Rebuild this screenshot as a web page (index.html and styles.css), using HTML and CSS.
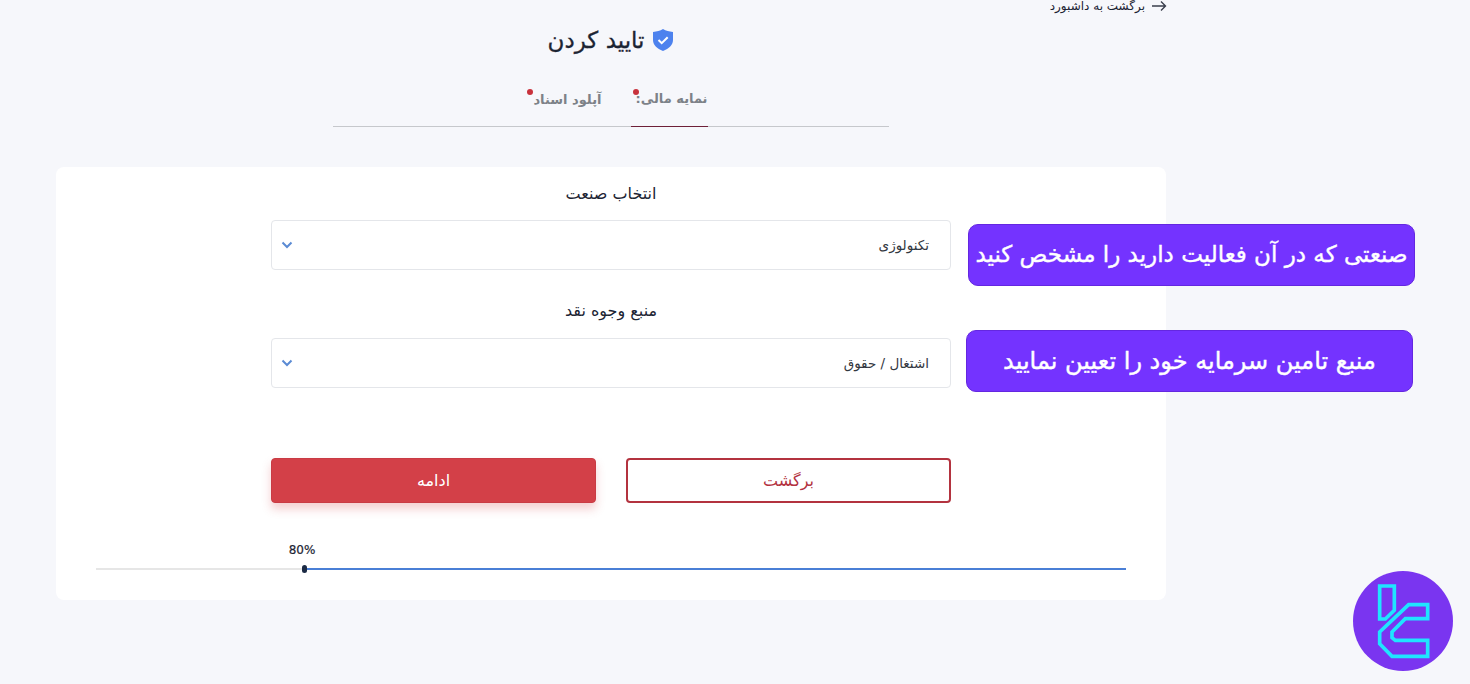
FILE: index.html
```html
<!DOCTYPE html>
<html lang="fa" dir="rtl">
<head>
  <meta charset="UTF-8">
  <title>تایید کردن</title>
  <link rel="stylesheet" href="styles.css">
</head>
<body>
<div class="page">
  <a class="back" href="#">
    <svg width="16" height="12" viewBox="0 0 16 12" fill="none" stroke="#3a3f4c" stroke-width="1.4"><path d="M1 6h13.500M10 1.500L14.500 6 10 10.500"/></svg>
    <span>برگشت به داشبورد</span>
  </a>
  <h1 class="title">
    <svg width="22" height="24" viewBox="0 0 22 24"><path d="M11 1c3 1.800 6 2.600 10 3v8c0 5-4 8.800-10 11C5 20.800 1 17 1 12V4c4-.4 7-1.200 10-3z" fill="#4d82ee"/><path d="M6.500 12l3.200 3.200 6-6" fill="none" stroke="#fff" stroke-width="2"/></svg>
    <span>تایید کردن</span>
  </h1>
  <div class="tabs">
    <div class="tab active">نمایه مالی:<i class="dot"></i></div>
    <div class="tab">آپلود اسناد<i class="dot"></i></div>
  </div>

  <div class="card">
    <div class="field">
      <label>انتخاب صنعت</label>
      <div class="select">
        <span>تکنولوژی</span>
        <svg width="12" height="8" viewBox="0 0 12 8" fill="none" stroke="#5b8bd4" stroke-width="2"><path d="M1.500 1.500L6 6l4.500-4.500"/></svg>
      </div>
    </div>
    <div class="field">
      <label>منبع وجوه نقد</label>
      <div class="select">
        <span>اشتغال / حقوق</span>
        <svg width="12" height="8" viewBox="0 0 12 8" fill="none" stroke="#5b8bd4" stroke-width="2"><path d="M1.500 1.500L6 6l4.500-4.500"/></svg>
      </div>
    </div>
    <div class="actions">
      <button class="btn btn-outline">برگشت</button>
      <button class="btn btn-solid">ادامه</button>
    </div>
    <div class="progress">
      <div class="progress-label">80%</div>
      <div class="track">
        <div class="fill"></div>
        <div class="thumb"></div>
      </div>
    </div>
  </div>
</div>

<div class="note note-one">صنعتی که در آن فعالیت دارید را مشخص کنید</div>
<div class="note note-two">منبع تامین سرمایه خود را تعیین نمایید</div>

<svg class="logo" width="100" height="100" viewBox="38 32 300 300">
  <circle cx="188" cy="182" r="150" fill="#7a35f0"/>
  <g fill="none" stroke="#1fe5ff" stroke-width="11">
    <path d="M118 77h44v73l-27 26h-17z"/>
    <path d="M262 133h-57l-87 82v35l37 38h107v-48h-97l-10-8v-17l40-40h67z"/>
  </g>
</svg>
</body>
</html>
```

FILE: styles.css
```css
html, body {
  margin: 0;
  padding: 0;
}

body {
  position: relative;
  height: 684px;
  overflow: hidden;
  background: #f6f7fb;
  font-family: "DejaVu Sans", sans-serif;
  color: #1c2433;
}

.page {
  width: 1110px;
  margin-right: 304px;
  display: flex;
  flex-direction: column;
}

.back {
  display: flex;
  align-items: center;
  gap: 6px;
  height: 12px;
  color: #1c2433;
  font-size: 12px;
  text-decoration: none;
}

.back svg {
  margin-right: -1px;
}

.title {
  display: flex;
  justify-content: center;
  align-items: center;
  gap: 8px;
  height: 28px;
  margin: 14px 0 0 0;
  font-size: 23px;
  font-weight: 400;
  -webkit-text-stroke: .3px #1c2433;
}

.tabs {
  display: flex;
  justify-content: center;
  gap: 29px;
  box-sizing: border-box;
  width: 556px;
  height: 73px;
  margin: 0 auto;
  padding-left: 10px;
  border-bottom: 1px solid #c6c8cc;
}

.tab {
  position: relative;
  display: flex;
  align-items: center;
  box-sizing: border-box;
  width: 77px;
  height: 73px;
  padding-top: 17px;
  font-size: 13px;
  font-weight: 700;
  color: #7d8288;
  white-space: nowrap;
}

.tab.active {
  border-bottom: 1px solid #6e2038;
}

.dot {
  position: absolute;
  left: 2px;
  top: 35px;
  width: 6px;
  height: 6px;
  border-radius: 50%;
  background: #c8323c;
}

.card {
  display: flex;
  flex-direction: column;
  align-items: center;
  box-sizing: border-box;
  height: 433px;
  margin-top: 40px;
  padding-top: 17px;
  background: #fff;
  border-radius: 8px;
}

.field {
  display: flex;
  flex-direction: column;
  align-items: center;
  width: 680px;
  margin-bottom: 31px;
}

.field label {
  height: 20px;
  line-height: 20px;
  margin-bottom: 16px;
  font-size: 16px;
}

.field:nth-child(2) label {
  margin-bottom: 17px;
}

.select {
  display: flex;
  justify-content: space-between;
  align-items: center;
  box-sizing: border-box;
  width: 100%;
  height: 50px;
  padding: 0 21px 0 9px;
  background: #fff;
  border: 1px solid #e4e6ea;
  border-radius: 4px;
  font-size: 13.500px;
  color: #33383f;
}

.actions {
  display: flex;
  gap: 30px;
  width: 680px;
  margin-top: 39px;
}

.btn {
  flex: 0 0 325px;
  height: 45px;
  border-radius: 4px;
  font-family: inherit;
  font-size: 16px;
  cursor: pointer;
}

.btn-outline {
  background: #fff;
  border: 2px solid #b3333f;
  color: #b3333f;
}

.btn-solid {
  background: #d34048;
  border: 1px solid #c93b44;
  color: #fff;
  box-shadow: 0 6px 10px rgba(211, 64, 72, .25);
}

.progress {
  width: 1030px;
  margin-top: 38px;
}

.progress-label {
  width: 30px;
  height: 18px;
  margin-right: 809px;
  line-height: 18px;
  text-align: center;
  font-size: 12px;
  -webkit-text-stroke: .2px #1c2433;
}

.track {
  position: relative;
  height: 2px;
  margin-top: 9px;
  background: #e6e6e6;
}

.fill {
  width: 80%;
  height: 2px;
  background: #4a7fd6;
}

.thumb {
  position: absolute;
  left: 205.500px;
  top: -3px;
  width: 5px;
  height: 8px;
  border-radius: 2.500px;
  background: #1c2b45;
}

.note {
  position: absolute;
  display: flex;
  align-items: center;
  justify-content: center;
  box-sizing: border-box;
  width: 447px;
  height: 62px;
  background: #7433ff;
  border: 1px solid #6427e0;
  border-radius: 10px;
  color: #fff;
  font-size: 23px;
  white-space: nowrap;
  -webkit-text-stroke: .4px #fff;
}

.note-one {
  left: 968px;
  top: 224px;
  padding-bottom: 3px;
}

.note-two {
  left: 966px;
  top: 330px;
  font-size: 24px;
}

.logo {
  position: absolute;
  left: 1353px;
  top: 571px;
}
```
